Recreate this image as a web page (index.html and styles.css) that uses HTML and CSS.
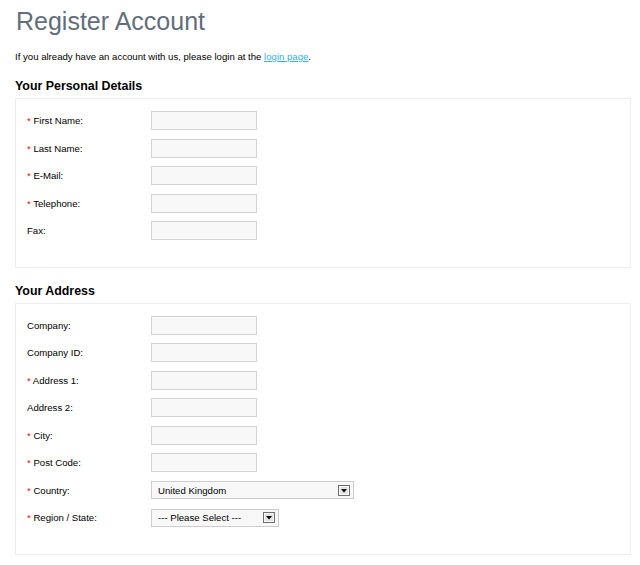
FILE: index.html
```html
<!DOCTYPE html>
<html>
<head>
<meta charset="utf-8">
<link rel="stylesheet" href="styles.css">
</head>
<body>
<div class="page">
  <h1 class="title">Register Account</h1>
  <p class="intro">If you already have an account with us, please login at the <a href="#" class="link">login page</a>.</p>

  <h2 class="section-title">Your Personal Details</h2>
  <div class="box">
    <div class="row"><label class="label"><span class="req">*</span> First Name:</label><input class="field" type="text"></div>
    <div class="row"><label class="label"><span class="req">*</span> Last Name:</label><input class="field" type="text"></div>
    <div class="row"><label class="label"><span class="req">*</span> E-Mail:</label><input class="field" type="text"></div>
    <div class="row"><label class="label"><span class="req">*</span> Telephone:</label><input class="field" type="text"></div>
    <div class="row"><label class="label">Fax:</label><input class="field" type="text"></div>
  </div>

  <h2 class="section-title">Your Address</h2>
  <div class="box">
    <div class="row"><label class="label">Company:</label><input class="field" type="text"></div>
    <div class="row"><label class="label">Company ID:</label><input class="field" type="text"></div>
    <div class="row"><label class="label"><span class="req">*</span> Address 1:</label><input class="field" type="text"></div>
    <div class="row"><label class="label">Address 2:</label><input class="field" type="text"></div>
    <div class="row"><label class="label"><span class="req">*</span> City:</label><input class="field" type="text"></div>
    <div class="row"><label class="label"><span class="req">*</span> Post Code:</label><input class="field" type="text"></div>
    <div class="row"><label class="label"><span class="req">*</span> Country:</label>
      <div class="select select-wide"><span class="select-text">United Kingdom</span><span class="arrow"><svg width="6" height="4" viewBox="0 0 6 4"><path d="M0 0H6L3 3.5Z" fill="#000"/></svg></span></div>
    </div>
    <div class="row"><label class="label"><span class="req">*</span> Region / State:</label>
      <div class="select select-narrow"><span class="select-text">--- Please Select ---</span><span class="arrow"><svg width="6" height="4" viewBox="0 0 6 4"><path d="M0 0H6L3 3.5Z" fill="#000"/></svg></span></div>
    </div>
  </div>
</div>
</body>
</html>
```

FILE: styles.css
```css
html, body {
  margin: 0;
  padding: 0;
  background: #fff;
}
body {
  font-family: "Liberation Sans", Arial, sans-serif;
  font-size: 9.6px;
  color: #000;
}
.page {
  padding: 6px 9px 0 15px;
}
.title {
  margin: 0 0 0 1px;
  font-size: 25px;
  font-weight: normal;
  color: #636e7b;
  line-height: 30px;
}
.intro {
  margin: 15px 0 0 0;
  line-height: 12px;
  font-size: 9.6px;
}
.link {
  color: #38b0e3;
  text-decoration: underline;
}
.section-title {
  margin: 16px 0 4px 0;
  font-size: 12.4px;
  font-weight: bold;
  line-height: 15px;
  color: #000;
}
.box {
  border: 1px solid #eeeeee;
  padding: 8px 0 22px 11px;
  margin-bottom: 15px;
}
.box + .section-title {
  margin-top: 0;
  padding-top: 1px;
}
.row {
  display: grid;
  grid-template-columns: 124px auto;
  align-items: center;
  height: 27.5px;
}
.label {
  font-size: 9.6px;
  color: #000;
}
.req {
  color: #ff0000;
}
.field {
  box-sizing: border-box;
  width: 106px;
  height: 19px;
  margin: 0;
  padding: 2px;
  border: 1px solid #d3d3d3;
  background: #f8f8f8;
  font: inherit;
}
.select {
  box-sizing: border-box;
  height: 18px;
  border: 1px solid #cccccc;
  background: #f8f8f8;
  display: flex;
  align-items: center;
  justify-content: space-between;
  padding: 0 3px 0 6px;
  font-size: 9.6px;
}
.select-wide {
  width: 203px;
}
.select-narrow {
  width: 128px;
}
.arrow {
  box-sizing: border-box;
  width: 12px;
  height: 11px;
  border: 1px solid #6e6e6e;
  box-shadow: inset 0 0 0 1px #fafafa;
  background: #e2e2e2;
  display: flex;
  align-items: center;
  justify-content: center;
}
.arrow svg {
  display: block;
  margin-top: 1px;
}
```
